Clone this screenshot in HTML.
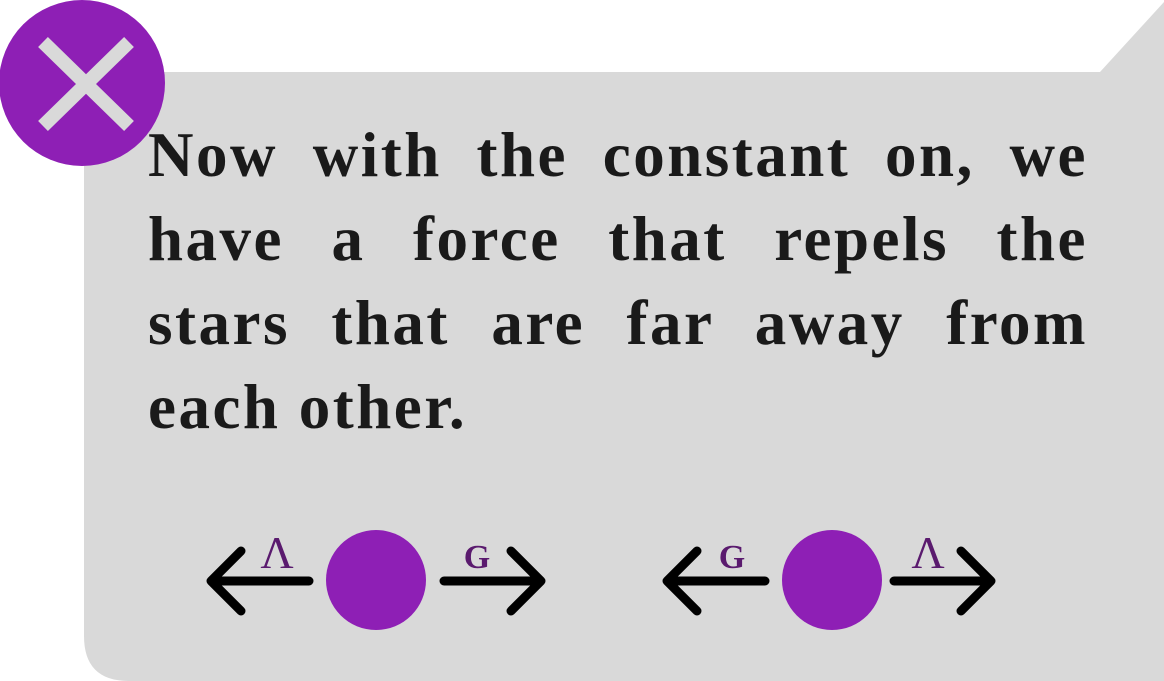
<!DOCTYPE html>
<html><head><meta charset="utf-8"><style>
html,body{margin:0;padding:0;width:1164px;height:681px;overflow:hidden;background:#fff;}
.l{position:absolute;left:148px;width:940px;font:bold 63px/84px "Liberation Serif",serif;letter-spacing:2.5px;color:#1a1a1a;text-align:justify;text-align-last:justify;white-space:nowrap;}
.last{text-align-last:left;}
</style></head><body>
<svg width="1164" height="681" style="position:absolute;left:0;top:0">
<path d="M84 72 H1100 L1164 2 V681 H129 Q84 681 84 636 Z" fill="#d9d9d9"/>
<circle cx="82" cy="83" r="83" fill="#8e1fb5"/>
<path d="M43 42 L129 126 M129 42 L43 126" stroke="#d9d9d9" stroke-width="14"/>
<g stroke="#000" stroke-width="9" fill="none" stroke-linecap="round" stroke-linejoin="round">
<path d="M309 581 H212 M241 551 L211 581 L241 611"/>
<path d="M444 581 H540 M511 551 L541 581 L511 611"/>
<path d="M765 581 H668 M697 551 L667 581 L697 611"/>
<path d="M894 581 H990 M961 551 L991 581 L961 611"/>
</g>
<circle cx="376" cy="580" r="50" fill="#8e1fb5"/>
<circle cx="832" cy="580" r="50" fill="#8e1fb5"/>
<g font-family="Liberation Serif,serif" font-weight="bold" fill="#5a1a6e" text-anchor="middle">
<text x="277" y="568" font-size="46" font-weight="normal">Λ</text>
<text x="477" y="568" font-size="34">G</text>
<text x="732" y="568" font-size="34">G</text>
<text x="928" y="568" font-size="46" font-weight="normal">Λ</text>
</g>
</svg>
<div class="l" style="top:113px">Now with the constant on, we</div>
<div class="l" style="top:197px">have a force that repels the</div>
<div class="l" style="top:281px">stars that are far away from</div>
<div class="l last" style="top:365px">each other.</div>
</body></html>
